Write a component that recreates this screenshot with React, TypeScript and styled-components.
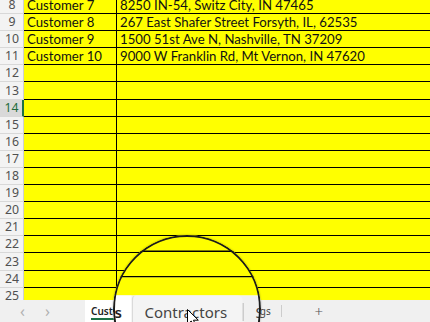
import React from 'react';
import styled, { createGlobalStyle } from 'styled-components';

const GlobalStyle = createGlobalStyle`
  html, body {
    margin: 0;
    padding: 0;
    background: #fff;
    overflow: hidden;
  }
`;

type RowData = { n: number; name?: string; address?: string };

const customers: RowData[] = [
  { n: 8, name: 'Customer 7', address: '8250 IN-54, Switz City, IN 47465' },
  { n: 9, name: 'Customer 8', address: '267 East Shafer Street Forsyth, IL, 62535' },
  { n: 10, name: 'Customer 9', address: '1500 51st Ave N, Nashville, TN 37209' },
  { n: 11, name: 'Customer 10', address: '9000 W Franklin Rd, Mt Vernon, IN 47620' },
];

const rows: RowData[] = [
  ...customers,
  ...Array.from({ length: 14 }, (_, i) => ({ n: 12 + i })),
];

const SELECTED_ROW = 14;

const Workbook = () => (
  <Book>
    <Sheet>
      <Grid>
        {rows.map((r) => (
          <Row key={r.n}>
            <RowHeader selected={r.n === SELECTED_ROW}>{r.n}</RowHeader>
            <Cell first>{r.name}</Cell>
            <Cell>{r.address}</Cell>
          </Row>
        ))}
      </Grid>
    </Sheet>
    <TabBar>
      <Nav>
        <NavBtn>‹</NavBtn>
        <NavBtn>›</NavBtn>
      </Nav>
      <Tab active>
        <TabLabel active>Customers</TabLabel>
      </Tab>
      <Tab hover>
        <TabLabel>Contractors</TabLabel>
      </Tab>
      <Sep />
      <Tab>
        <TabLabel>Settings</TabLabel>
      </Tab>
      <Sep />
      <AddBtn>+</AddBtn>
    </TabBar>
  </Book>
);

export default function App() {
  return (
    <>
      <GlobalStyle />
      <Frame>
        <Workbook />
        <Lens>
          <Magnified>
            <Workbook />
          </Magnified>
        </Lens>
        <Cursor viewBox="0 0 12 19" width="12" height="19">
          <path
            d="M0.5 0.5 L0.5 15.5 L4.2 12 L6.8 18 L9 17 L6.5 11.2 L11.3 11.2 Z"
            fill="#fff"
            stroke="#000"
            strokeWidth="1"
            strokeLinejoin="round"
          />
        </Cursor>
      </Frame>
    </>
  );
}

const Frame = styled.div`
  position: relative;
  width: 430px;
  height: 322px;
  overflow: hidden;
`;

const Book = styled.div`
  width: 430px;
  height: 322px;
  display: flex;
  flex-direction: column;
  background: #fff;
`;

const Sheet = styled.div`
  height: 301px;
  overflow: hidden;
`;

const Grid = styled.div`
  margin-top: -3px;
`;

const Row = styled.div`
  display: grid;
  grid-template-columns: 24px 93px 1fr;
  height: 17.1px;
`;

const RowHeader = styled.div<{ selected?: boolean }>`
  box-sizing: border-box;
  display: flex;
  align-items: flex-end;
  justify-content: center;
  padding-left: 1px;
  font-family: 'Noto Sans', sans-serif;
  font-size: 12.3px;
  line-height: 16px;
  color: ${(p) => (p.selected ? '#1e6b3c' : '#505050')};
  background: ${(p) => (p.selected ? '#d9d9d9' : '#f3f3f3')};
  border-bottom: 1px solid #d8d8d8;
  border-right: ${(p) => (p.selected ? '2px solid #1e7145' : '1px solid #cfcfcf')};
`;

const Cell = styled.div<{ first?: boolean }>`
  box-sizing: border-box;
  display: flex;
  align-items: flex-end;
  padding: 0 0 0 3px;
  background: #ffff00;
  border-bottom: 1px solid #000;
  border-right: ${(p) => (p.first ? '1px solid #000' : 'none')};
  font-family: Lato, 'Liberation Sans', sans-serif;
  font-size: 13.2px;
  line-height: 16px;
  color: #111;
  white-space: nowrap;
  overflow: hidden;
`;

const TabBar = styled.div`
  flex: 1;
  display: flex;
  align-items: stretch;
  background: #f0f0f0;
  font-family: 'Noto Sans', sans-serif;
`;

const Nav = styled.div`
  display: flex;
  padding-left: 10px;
  width: 85px;
  box-sizing: border-box;
`;

const NavBtn = styled.div`
  width: 25px;
  display: flex;
  align-items: center;
  justify-content: center;
  font-size: 16px;
  color: #b0b0b0;
`;

const Tab = styled.div<{ active?: boolean; hover?: boolean }>`
  display: flex;
  align-items: center;
  padding: 0 ${(p) => (p.active ? '6px' : '10px')} 0 ${(p) => (p.active ? '6px' : '8px')};
  background: ${(p) => (p.active ? '#ffffff' : p.hover ? '#f4f4f4' : 'transparent')};
  border-left: ${(p) => (p.hover ? '1px solid #dadada' : 'none')};
  border-radius: ${(p) => (p.hover ? '3px 3px 0 0' : '0')};
`;

const TabLabel = styled.span<{ active?: boolean }>`
  font-size: 10px;
  line-height: 14px;
  color: ${(p) => (p.active ? '#222' : '#444')};
  font-weight: ${(p) => (p.active ? 600 : 400)};
  padding-top: 2px;
  border-bottom: 2px solid ${(p) => (p.active ? '#1e7145' : 'transparent')};
`;

const Sep = styled.div`
  width: 1px;
  height: 12px;
  align-self: center;
  background: #cccccc;
`;

const AddBtn = styled.div`
  width: 74px;
  display: flex;
  align-items: center;
  justify-content: center;
  font-size: 15px;
  font-weight: 300;
  color: #555;
`;

const Lens = styled.div`
  position: absolute;
  left: 113px;
  top: 235px;
  width: 148px;
  height: 148px;
  border-radius: 50%;
  overflow: hidden;
  box-shadow: 0 0 2px rgba(0, 0, 0, 0.35);

  &::after {
    content: '';
    position: absolute;
    inset: 0;
    border-radius: 50%;
    border: 2.5px solid #1b1b1b;
    pointer-events: none;
  }
`;

const Magnified = styled.div`
  position: absolute;
  left: -113px;
  top: -235px;
  transform: scale(1.5);
  transform-origin: 187px 309px;
`;

const Cursor = styled.svg`
  position: absolute;
  left: 187px;
  top: 309px;
`;
